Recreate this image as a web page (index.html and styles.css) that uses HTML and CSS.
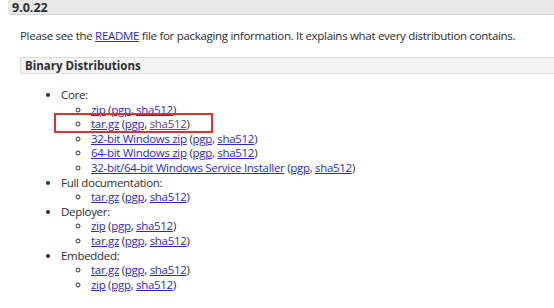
FILE: index.html
```html
<!DOCTYPE html>
<html>
  <head>
    <title>Tomcat 9.0.22</title>
    <meta name="viewport" content="width=device-width">
    <link rel="stylesheet" href="styles.css">
  </head>
  <body>
    <div class="release">
      <h3 class="relHead">9.0.22</h3>
      <div class="relBody">
        <p>Please see the <a href="#">README</a> file for packaging information. It explains what every distribution contains.</p>
        <h4 class="distHead">Binary Distributions</h4>
        <ul class="dist">
          <li>Core:
            <ul>
              <li><a href="#">zip</a> (<a href="#">pgp</a>, <a href="#">sha512</a>)</li>
              <li class="marked"><a href="#">tar.gz</a> (<a href="#">pgp</a>, <a href="#" class="visited">sha512</a>)</li>
              <li><a href="#">32-bit Windows zip</a> (<a href="#">pgp</a>, <a href="#">sha512</a>)</li>
              <li><a href="#">64-bit Windows zip</a> (<a href="#">pgp</a>, <a href="#">sha512</a>)</li>
              <li><a href="#">32-bit/64-bit Windows Service Installer</a> (<a href="#">pgp</a>, <a href="#">sha512</a>)</li>
            </ul>
          </li>
          <li>Full documentation:
            <ul>
              <li><a href="#">tar.gz</a> (<a href="#">pgp</a>, <a href="#">sha512</a>)</li>
            </ul>
          </li>
          <li>Deployer:
            <ul>
              <li><a href="#">zip</a> (<a href="#">pgp</a>, <a href="#">sha512</a>)</li>
              <li><a href="#">tar.gz</a> (<a href="#">pgp</a>, <a href="#">sha512</a>)</li>
            </ul>
          </li>
          <li>Embedded:
            <ul>
              <li><a href="#">tar.gz</a> (<a href="#">pgp</a>, <a href="#">sha512</a>)</li>
              <li><a href="#">zip</a> (<a href="#">pgp</a>, <a href="#">sha512</a>)</li>
            </ul>
          </li>
        </ul>
      </div>
    </div>
  </body>
</html>
```
FILE: styles.css
```css
body {
  margin: 0;
  font-family: "Open Sans", "DejaVu Sans", sans-serif;
  font-size: 11.5px;
  letter-spacing: -0.3px;
  color: #2e2e2e;
  background: #fff;
}

a {
  color: #2b2bd0;
}
a.visited {
  color: #6a3f8a;
}

.release {
  margin-left: 8px;
}

.relHead {
  margin: 0;
  padding: 0 4px;
  height: 14px;
  line-height: 16px;
  font-size: 12.5px;
  letter-spacing: 0;
  background-color: #e9e9e9;
  border-bottom: 1px solid #d4d4d4;
  border-bottom-left-radius: 3px;
}

.relBody {
  padding-left: 12px;
}

.relBody p {
  margin: 13px 0 0;
  line-height: 16px;
}

.distHead {
  margin: 13px 0 0;
  padding: 0 4px;
  height: 15px;
  line-height: 15px;
  font-size: 11.5px;
  letter-spacing: 0;
  background-color: #f4f4f4;
  border: 1px solid #dcdcdc;
  border-right: none;
  border-radius: 3px 0 0 3px;
}

ul.dist {
  margin: 14px 0 0;
  padding-left: 41px;
  line-height: 14.6px;
}

ul.dist ul {
  margin: 0;
  padding-left: 30px;
  list-style-type: circle;
}

.marked {
  position: relative;
}
.marked::after {
  content: "";
  position: absolute;
  left: -37px;
  top: -4px;
  width: 155px;
  height: 16px;
  border: 2px solid #e0302f;
}
```
